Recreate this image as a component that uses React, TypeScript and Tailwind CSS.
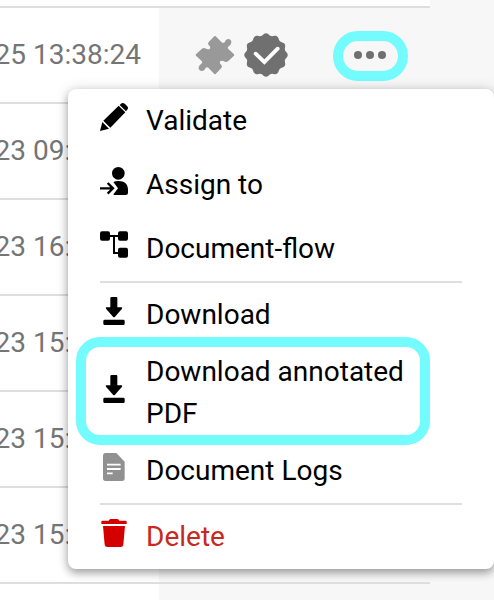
import React from "react";

const dates = ["25 13:38:24", "23 09:14:10", "23 16:20:31", "23 15:42:18", "23 15:40:02", "23 15:38:47"];

const Svg = ({ children }: { children: React.ReactNode }) => (
  <svg viewBox="0 0 84 84" className="h-7 w-7 shrink-0">{children}</svg>
);

const Pencil = () => (
  <Svg>
    <path d="M0 84 7 57 27 77Z M10 53 56 8 76 28 31 74Z M59 6 62 3Q68-3 75 3L81 9Q87 15 81 21L78 25Z" />
  </Svg>
);

const Assign = () => (
  <Svg>
    <circle cx="55" cy="19" r="19" />
    <path d="M40 45Q47 42 55 42C74 42 84 52 84 68V78Q84 84 77 84H42Q39 84 41 81L54 64Z" />
    <path d="M0 64H38M23 48 39 64 23 80" fill="none" stroke="black" strokeWidth="7" />
  </Svg>
);

const Flow = () => (
  <Svg>
    <rect x="0" y="1" width="30" height="28" rx="6" />
    <rect x="54" y="1" width="30" height="28" rx="6" />
    <rect x="54" y="50" width="30" height="30" rx="6" />
    <path d="M28 15H56M42 15V66H56" fill="none" stroke="black" strokeWidth="6" />
  </Svg>
);

const Download = () => (
  <Svg>
    <path d="M35 0H49Q52 0 52 3V31H64Q68 31 66 35L45 59Q42 62 39 59L18 35Q16 31 20 31H31V3Q31 0 35 0Z" />
    <rect x="10" y="68" width="64" height="16" rx="4" />
  </Svg>
);

const Doc = () => (
  <Svg>
    <path d="M17 0H49L74 26V76Q74 84 66 84H17Q9 84 9 76V8Q9 0 17 0Z" fill="#919191" />
    <path d="M21 35H62M21 48H62M21 61H38" stroke="white" strokeWidth="5.5" />
  </Svg>
);

const Trash = () => (
  <Svg>
    <path d="M4 8Q4 5 7 5H26Q28 0 32 0H52Q56 0 58 5H77Q80 5 80 8V15H4Z M9 21H75L70 77Q69 84 62 84H22Q15 84 14 77Z" fill="#d40000" />
  </Svg>
);

const Row = ({ icon, children, tall, red }: { icon: React.ReactNode; children: React.ReactNode; tall?: boolean; red?: boolean }) => (
  <div className={`flex gap-[18px] pl-8 pr-8 ${tall ? "h-[92px] pt-1" : "h-16 pt-[11px]"} ${red ? "text-[#c62a20]" : "text-black"}`}>
    <div className={tall ? "pt-6" : "pt-[3px]"}>{icon}</div>
    <div className="w-[290px] leading-[42px]">{children}</div>
  </div>
);

const Divider = () => <div className="mx-8 h-0.5 bg-[#dfdfdf]" />;

// Scalloped seal outline with twelve rounded lobes.
const seal = Array.from({ length: 120 }, (_, i) => {
  const a = (i / 120) * Math.PI * 2;
  const r = 62 + 3.2 * Math.cos(12 * a);
  return `${(66 + r * Math.sin(a)).toFixed(2)},${(66 - r * Math.cos(a)).toFixed(2)}`;
}).join(" ");

export default function App() {
  return (
    <div className="relative h-[600px] w-[494px] overflow-hidden bg-[#f7f7f7] text-[28px] [font-family:Roboto,sans-serif]">
      <div className="h-2 w-[430px] border-b-2 border-[#dedede] bg-white" />
      {dates.map((d, i) => (
        <div key={i} className="flex h-24 w-[430px] border-b-2 border-[#dedede]">
          <div className="flex w-[159px] items-center justify-end bg-white pr-[18px] text-[#757575]">
            <span className="whitespace-nowrap">{d}</span>
          </div>
          {i === 0 && (
            <div className="flex flex-1 items-center pl-9 pt-0.5">
              <svg viewBox="0 0 120 120" className="-mt-0.5 h-10 w-10">
                <path fill="#999999" d="M3 58 20 42Q25 38 30 40Q40 45 45 41Q48 35 41 30Q37 26 41 21L58 4Q60 2 62 4L80 22Q85 26 90 20C93 8 111 10 109 23Q107 31 101 34Q96 37 100 42L117 58Q119 60 117 62L100 78Q95 82 90 80Q80 75 75 79Q72 85 79 90Q83 94 79 99L62 117Q60 119 58 117L40 98Q35 94 31 100C28 112 9 110 11 97Q13 89 19 86Q24 83 20 78L3 62Q1 60 3 58Z" />
              </svg>
              <svg viewBox="0 0 132 132" className="-mt-0.5 ml-[9px] h-11 w-11">
                <polygon points={seal} fill="#707070" />
                <path d="M35 62 61 87 101 47" fill="none" stroke="white" strokeWidth="11.5" strokeLinecap="round" />
              </svg>
              <div className="ml-[45px] flex h-[50px] w-[75px] items-center justify-center gap-1 rounded-[25px] border-10 border-[#73fbfd] pb-0.5 pr-px">
                <i className="h-2 w-2 rounded-full bg-[#707070]" />
                <i className="h-2 w-2 rounded-full bg-[#707070]" />
                <i className="h-2 w-2 rounded-full bg-[#707070]" />
              </div>
            </div>
          )}
        </div>
      ))}
      <div className="h-4 w-[159px] bg-white" />

      <div className="absolute left-[68px] top-[89px] w-[426px] rounded-lg bg-white shadow-[0_4px_8px_rgba(0,0,0,0.32),0_0_14px_rgba(0,0,0,0.13)]">
        <Row icon={<Pencil />}>Validate</Row>
        <Row icon={<Assign />}>Assign to</Row>
        <Row icon={<Flow />}>Document-flow</Row>
        <Divider />
        <Row icon={<Download />}>Download</Row>
        <Row icon={<Download />} tall>Download annotated PDF</Row>
        <Row icon={<Doc />}>Document Logs</Row>
        <Divider />
        <Row icon={<Trash />} red>Delete</Row>
        <div className="absolute left-2 top-[248px] h-[108px] w-[354px] rounded-[24px] border-10 border-[#73fbfd]" />
      </div>
    </div>
  );
}
